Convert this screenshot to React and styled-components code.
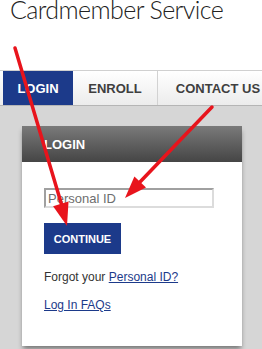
import React from 'react';
import styled, { createGlobalStyle } from 'styled-components';

const GlobalStyle = createGlobalStyle`
  html, body {
    margin: 0;
    padding: 0;
    background: #ffffff;
  }
  body {
    font-family: "Liberation Sans", Arial, sans-serif;
    width: 262px;
    height: 349px;
    overflow: hidden;
  }
`;

const tabs = [
  { label: 'LOGIN', active: true, width: 70 },
  { label: 'ENROLL', width: 84 },
  { label: 'CONTACT US', width: 120 },
];

const App = () => {
  return (
    <Page>
      <GlobalStyle />
      <Title>Cardmember Service</Title>

      <NavBar>
        {tabs.map(t => (
          <Tab key={t.label} active={t.active} w={t.width}>{t.label}</Tab>
        ))}
      </NavBar>

      <Content>
        <Panel>
          <PanelHeader>LOGIN</PanelHeader>
          <PanelBody>
            <IdInput placeholder="Personal ID" />
            <ContinueButton>CONTINUE</ContinueButton>
            <HelpLine>Forgot your <HelpLink href="#">Personal ID?</HelpLink></HelpLine>
            <HelpLine><HelpLink href="#">Log In FAQs</HelpLink></HelpLine>
          </PanelBody>
        </Panel>
      </Content>

      <Arrows width="262" height="349" viewBox="0 0 262 349">
        <line x1="15" y1="48" x2="62" y2="206" stroke="#e8141c" strokeWidth="3.5" strokeLinecap="round" />
        <polygon points="68.5,201.6 53.1,206.2 67,226" fill="#e8141c" />
        <line x1="212" y1="107" x2="139" y2="183" stroke="#e8141c" strokeWidth="3.5" strokeLinecap="round" />
        <polygon points="146,187.6 134.4,176.6 125,198" fill="#e8141c" />
      </Arrows>
    </Page>
  );
};

const Page = styled.div`
  position: relative;
  width: 262px;
  height: 349px;
  display: flex;
  flex-direction: column;
`;

const Title = styled.h1`
  margin: 0;
  padding: 0 0 0 10px;
  height: 70px;
  font-family: Lato, "Open Sans", sans-serif;
  font-weight: 300;
  font-size: 25px;
  line-height: 18px;
  color: #222;
  letter-spacing: -0.6px;
  white-space: nowrap;
`;

const NavBar = styled.div`
  display: flex;
  height: 34px;
  padding-left: 3px;
  border-top: 1px solid #d0d0d0;
  border-bottom: 1px solid #b5b5b5;
  background: linear-gradient(#ffffff, #ececec);
  flex-shrink: 0;
`;

const Tab = styled.div`
  flex: 0 0 ${p => p.w}px;
  display: flex;
  align-items: center;
  justify-content: center;
  font-weight: 700;
  font-size: 13px;
  color: ${p => (p.active ? '#ffffff' : '#3f3f3f')};
  background: ${p => (p.active ? '#1c3a8a' : 'transparent')};
  border-right: ${p => (p.active ? 'none' : '1px solid #d2d2d2')};
  white-space: nowrap;
`;

const Content = styled.div`
  flex: 1;
  background: #d6d6d6;
  padding: 20px 0 0 22px;
`;

const Panel = styled.div`
  width: 220px;
  box-shadow: 0 4px 5px -1px rgba(0, 0, 0, 0.45);
`;

const PanelHeader = styled.div`
  height: 36px;
  padding-left: 22px;
  display: flex;
  align-items: center;
  background: linear-gradient(#7a7a7a, #454545);
  color: #ffffff;
  font-weight: 700;
  font-size: 13px;
`;

const PanelBody = styled.div`
  background: #ffffff;
  height: 158px;
  padding: 26px 22px 0 22px;
  display: flex;
  flex-direction: column;
  align-items: flex-start;
`;

const IdInput = styled.input`
  box-sizing: border-box;
  width: 170px;
  height: 20px;
  margin: 0;
  padding: 0 2px;
  border: 2px solid #a0a0a0;
  border-right-color: #dcdcdc;
  border-bottom-color: #dcdcdc;
  font-family: "Liberation Sans", Arial, sans-serif;
  font-size: 13px;
  color: #333;
  &::placeholder {
    color: #6e6e6e;
  }
`;

const ContinueButton = styled.button`
  margin-top: 15px;
  width: 77px;
  height: 31px;
  border: none;
  padding: 0;
  background: #1c3a8a;
  color: #ffffff;
  font-family: "Liberation Sans", Arial, sans-serif;
  font-weight: 700;
  font-size: 11px;
`;

const HelpLine = styled.div`
  margin-top: 16px;
  font-size: 12px;
  line-height: 14px;
  color: #333;
  & + & {
    margin-top: 14px;
  }
`;

const HelpLink = styled.a`
  color: #1c3a8a;
  text-decoration: underline;
`;

const Arrows = styled.svg`
  position: absolute;
  top: 0;
  left: 0;
  pointer-events: none;
`;

export default App;
